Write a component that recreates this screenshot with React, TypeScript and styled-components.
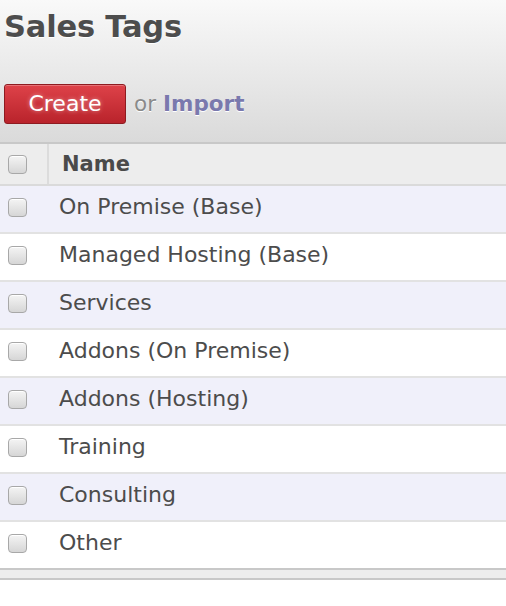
import React from "react";
import styled, { createGlobalStyle } from "styled-components";

const Global = createGlobalStyle`
  html, body { margin: 0; padding: 0; background: #fff; }
  body { font-family: "DejaVu Sans", "Liberation Sans", sans-serif; }
`;

const Page = styled.div`
  width: 506px;
  display: flex;
  flex-direction: column;
`;

const Header = styled.div`
  height: 144px;
  box-sizing: border-box;
  padding: 8px 0 0 4px;
  background: linear-gradient(#f9f9f9, #dadada);
  border-bottom: 2px solid #c8c8c8;
  display: flex;
  flex-direction: column;
`;

const Title = styled.h1`
  margin: 0;
  font-size: 30.5px;
  font-weight: bold;
  color: #4d4d4d;
  line-height: 38px;
  letter-spacing: -0.2px;
  text-shadow: 0 1px 0 #fff;
`;

const Actions = styled.div`
  margin-top: 38px;
  display: flex;
  align-items: center;
  gap: 8px;
`;

const CreateButton = styled.button`
  width: 122px;
  height: 40px;
  box-sizing: border-box;
  border: 1px solid #8e1b20;
  border-radius: 3px;
  background: linear-gradient(#de4249, #b9232b);
  color: #fff;
  font-family: "DejaVu Sans", sans-serif;
  font-size: 22px;
  padding: 0 0 2px;
  text-shadow: 0 0 4px rgba(255, 255, 255, 0.5);
  box-shadow: inset 0 1px 0 rgba(255, 255, 255, 0.25);
`;

const Or = styled.span`
  font-size: 21.5px;
  color: #8a8a8a;
  padding-bottom: 2px;
  text-shadow: 0 1px 0 #fff;
`;

const ImportLink = styled.span`
  font-size: 21.5px;
  font-weight: bold;
  color: #7a79ad;
  margin-left: -1px;
  padding-bottom: 2px;
  text-shadow: 0 1px 0 #fff;
`;

const Table = styled.div`
  display: flex;
  flex-direction: column;
`;

const HeadRow = styled.div`
  height: 40px;
  background: #ededed;
  border-bottom: 2px solid #dadada;
  display: flex;
`;

const CheckCell = styled.div<{ $divider?: boolean }>`
  width: 49px;
  flex-shrink: 0;
  display: flex;
  align-items: center;
  padding-left: 8px;
  box-sizing: border-box;
  border-right: ${(p) => (p.$divider ? "2px solid #dcdcdc" : "2px solid transparent")};
`;

const Box = styled.span`
  width: 19px;
  height: 19px;
  box-sizing: border-box;
  border: 1px solid #a8a8a8;
  border-radius: 4px;
  background: linear-gradient(#f4f4f4, #d6d6d6);
  box-shadow: inset 0 1px 0 #fff;
`;

const HeadName = styled.div`
  display: flex;
  align-items: center;
  padding-left: 13px;
  padding-bottom: 1px;
  font-size: 21px;
  font-weight: bold;
  color: #4a4a4a;
`;

const Row = styled.div<{ $odd: boolean; $last: boolean }>`
  height: 48px;
  box-sizing: border-box;
  padding-bottom: 3px;
  background: ${(p) => (p.$odd ? "#f0f0fa" : "#ffffff")};
  border-bottom: 2px solid ${(p) => (p.$last ? "#c8c8c8" : "#e2e2e2")};
  display: flex;
`;

const NameCell = styled.div`
  display: flex;
  align-items: center;
  padding-left: 10px;
  padding-bottom: 2px;
  font-size: 22px;
  color: #4c4c4c;
`;

const Footer = styled.div`
  height: 8px;
  background: #ededed;
  border-bottom: 2px solid #c8c8c8;
`;

const tags = [
  "On Premise (Base)",
  "Managed Hosting (Base)",
  "Services",
  "Addons (On Premise)",
  "Addons (Hosting)",
  "Training",
  "Consulting",
  "Other",
];

export default function App() {
  return (
    <Page>
      <Global />
      <Header>
        <Title>Sales Tags</Title>
        <Actions>
          <CreateButton>Create</CreateButton>
          <Or>or</Or>
          <ImportLink>Import</ImportLink>
        </Actions>
      </Header>
      <Table>
        <HeadRow>
          <CheckCell $divider>
            <Box />
          </CheckCell>
          <HeadName>Name</HeadName>
        </HeadRow>
        {tags.map((t, i) => (
          <Row key={t} $odd={i % 2 === 0} $last={i === tags.length - 1}>
            <CheckCell>
              <Box />
            </CheckCell>
            <NameCell>{t}</NameCell>
          </Row>
        ))}
        <Footer />
      </Table>
    </Page>
  );
}
